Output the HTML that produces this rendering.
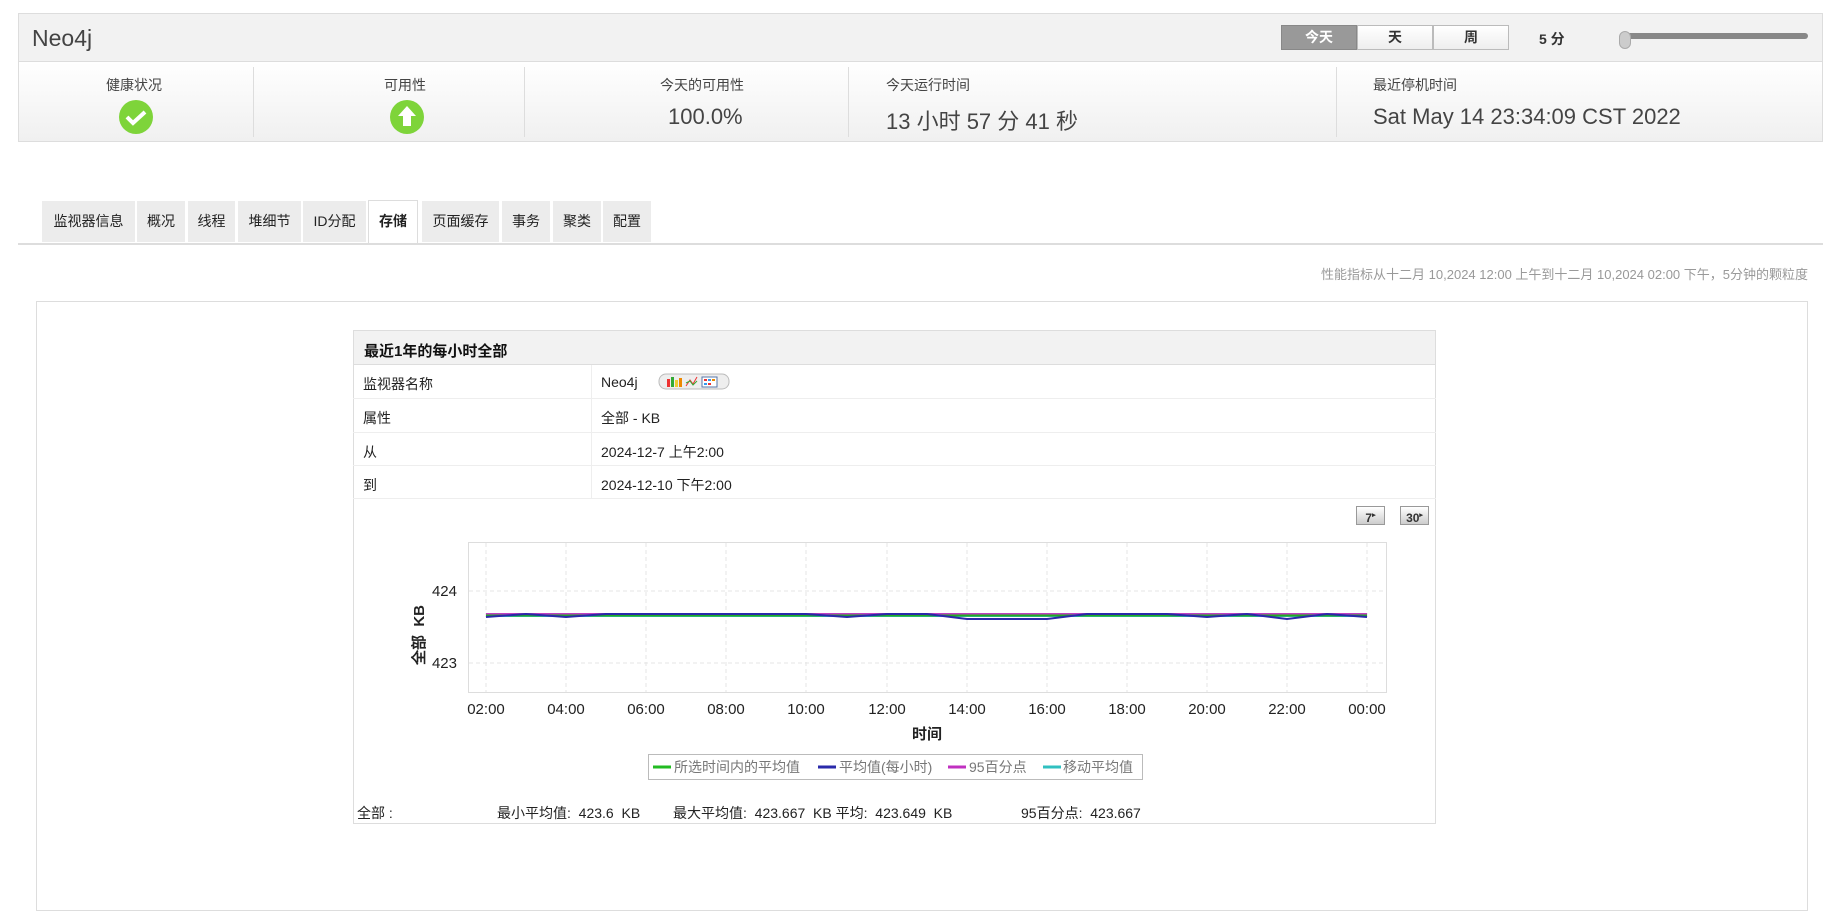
<!DOCTYPE html>
<html><head><meta charset="utf-8">
<style>
*{margin:0;padding:0;box-sizing:border-box}
body{width:1835px;height:899px;overflow:hidden;background:#fff;font-family:"Liberation Sans","Noto Sans CJK SC",sans-serif;color:#333;position:relative}
.a{position:absolute;white-space:nowrap}
.hdr{left:18px;top:13px;width:1805px;height:129px;border:1px solid #ddd;background:#f2f2f2}
.stats{left:18px;top:61px;width:1805px;height:81px;border:1px solid #ddd;border-top:1px solid #ddd;background:linear-gradient(#fff,#f0f0f0)}
.div{width:1px;background:#ddd;top:67px;height:70px}
.lbl{font-size:14px;color:#444}
.val{font-size:22px;color:#444}
.btn{top:25px;height:25px;width:76px;border:1px solid #bbb;background:linear-gradient(#fff,#eee);font-size:14px;font-weight:bold;color:#333;text-align:center;line-height:23px}
.tab{top:201px;height:41px;background:#ececec;font-size:14px;color:#222;text-align:center;line-height:41px}
.row{left:353px;width:1083px;border-bottom:1px solid #eee;font-size:14px;color:#222}
.row span{position:absolute;top:9px}
.tl{font-size:15px;fill:#222;font-family:"Liberation Sans",sans-serif}
</style></head><body>
<div class="a hdr"></div>
<div class="a stats"></div>
<div class="a" style="left:32px;top:25px;font-size:23px;color:#444">Neo4j</div>
<div class="a btn" style="left:1281px;background:#999;color:#fff;border-color:#888">今天</div>
<div class="a btn" style="left:1357px">天</div>
<div class="a btn" style="left:1433px">周</div>
<div class="a" style="left:1539px;top:29px;font-size:14px;font-weight:bold">5 分</div>
<div class="a" style="left:1622px;top:33px;width:186px;height:6px;background:#888;border-radius:3px"></div>
<div class="a" style="left:1619px;top:31px;width:12px;height:18px;background:#ccc;border:1px solid #aaa;border-radius:6px"></div>

<div class="a div" style="left:253px"></div>
<div class="a div" style="left:524px"></div>
<div class="a div" style="left:848px"></div>
<div class="a div" style="left:1336px"></div>
<div class="a lbl" style="left:106px;top:75px">健康状况</div>
<div class="a lbl" style="left:384px;top:75px">可用性</div>
<div class="a lbl" style="left:660px;top:75px">今天的可用性</div>
<div class="a lbl" style="left:886px;top:75px">今天运行时间</div>
<div class="a lbl" style="left:1373px;top:75px">最近停机时间</div>
<svg class="a" style="left:118px;top:99px" width="36" height="36"><circle cx="18" cy="18" r="17" fill="#7ed43a"/><path d="M9 18 l6 6 l12 -11" stroke="#fff" stroke-width="4" fill="none"/></svg>
<svg class="a" style="left:389px;top:99px" width="36" height="36"><circle cx="18" cy="18" r="17" fill="#7ed43a"/><path d="M18 7 l9 10 h-5 v10 h-8 v-10 h-5z" fill="#fff"/></svg>
<div class="a val" style="left:668px;top:104px">100.0%</div>
<div class="a val" style="left:886px;top:104px">13 小时 57 分 41 秒</div>
<div class="a val" style="left:1373px;top:104px">Sat May 14 23:34:09 CST 2022</div>

<div class="a tab" style="left:42px;width:93px">监视器信息</div>
<div class="a tab" style="left:137px;width:48px">概况</div>
<div class="a tab" style="left:188px;width:47px">线程</div>
<div class="a tab" style="left:238px;width:63px">堆细节</div>
<div class="a tab" style="left:303px;width:63px">ID分配</div>
<div class="a tab" style="left:368px;width:50px;background:#fff;border:1px solid #ddd;border-bottom:none;font-weight:bold;top:200px;height:44px">存储</div>
<div class="a tab" style="left:422px;width:77px">页面缓存</div>
<div class="a tab" style="left:502px;width:48px">事务</div>
<div class="a tab" style="left:553px;width:48px">聚类</div>
<div class="a tab" style="left:603px;width:48px">配置</div>
<div class="a" style="left:18px;top:243px;width:1805px;height:2px;background:#ddd"></div>
<div class="a" style="right:27px;top:264px;font-size:13px;color:#999">性能指标从十二月 10,2024 12:00 上午到十二月 10,2024 02:00 下午，5分钟的颗粒度</div>

<div class="a" style="left:36px;top:301px;width:1772px;height:610px;border:1px solid #ddd"></div>
<div class="a" style="left:353px;top:330px;width:1083px;height:494px;border:1px solid #ddd"></div>
<div class="a" style="left:354px;top:331px;width:1081px;height:34px;background:#f2f2f2;border-bottom:1px solid #ddd;font-size:15px;font-weight:bold;color:#111;padding:9px 10px">最近1年的每小时全部</div>
<div class="a row" style="top:365px;height:34px"><span style="left:10px">监视器名称</span><span style="left:248px">Neo4j</span></div>
<div class="a row" style="top:399px;height:34px"><span style="left:10px">属性</span><span style="left:248px">全部 - KB</span></div>
<div class="a row" style="top:433px;height:33px"><span style="left:10px">从</span><span style="left:248px">2024-12-7 上午2:00</span></div>
<div class="a row" style="top:466px;height:33px"><span style="left:10px">到</span><span style="left:248px">2024-12-10 下午2:00</span></div>
<div class="a" style="left:591px;top:365px;width:1px;height:134px;background:#eee"></div>
<svg class="a" style="left:658px;top:373px" width="72" height="17"><rect x="1" y="1" width="70" height="15" rx="7" fill="#eee" stroke="#bbb"/><rect x="9" y="6" width="3" height="8" fill="#e33"/><rect x="13" y="4" width="3" height="10" fill="#3a3"/><rect x="17" y="7" width="3" height="7" fill="#ec3"/><rect x="21" y="5" width="3" height="9" fill="#e80"/><path d="M28 13 l4 -6 l3 4 l4 -7" stroke="#e33" fill="none"/><path d="M28 10 l4 -2 l3 4 l4 -4" stroke="#3a3" fill="none"/><rect x="44" y="4" width="15" height="10" fill="#fff" stroke="#57a"/><rect x="46" y="6" width="3" height="2" fill="#e33"/><rect x="50" y="6" width="3" height="2" fill="#39e"/><rect x="54" y="6" width="3" height="2" fill="#e80"/><rect x="46" y="10" width="3" height="2" fill="#39e"/><rect x="50" y="10" width="3" height="2" fill="#e33"/></svg>

<div class="a" style="left:1356px;top:506px;width:29px;height:19px;border:1px solid #999;background:linear-gradient(#fff,#ccc);font-size:12px;font-weight:bold;text-align:center;line-height:17px">7<sup style="font-size:7px">▸</sup></div>
<div class="a" style="left:1400px;top:506px;width:29px;height:19px;border:1px solid #999;background:linear-gradient(#fff,#ccc);font-size:12px;font-weight:bold;text-align:center;line-height:17px">30<sup style="font-size:7px">▸</sup></div>

<svg class="a" style="left:0;top:0" width="1835" height="899">
<rect x="468.5" y="542.5" width="918" height="150" fill="#fff" stroke="#ddd"/>
<g stroke="#e4e4e4" stroke-dasharray="4,3">
<line x1="486" y1="543" x2="486" y2="692"/><line x1="566" y1="543" x2="566" y2="692"/><line x1="646" y1="543" x2="646" y2="692"/><line x1="726" y1="543" x2="726" y2="692"/><line x1="806" y1="543" x2="806" y2="692"/><line x1="887" y1="543" x2="887" y2="692"/><line x1="967" y1="543" x2="967" y2="692"/><line x1="1047" y1="543" x2="1047" y2="692"/><line x1="1127" y1="543" x2="1127" y2="692"/><line x1="1207" y1="543" x2="1207" y2="692"/><line x1="1287" y1="543" x2="1287" y2="692"/><line x1="1367" y1="543" x2="1367" y2="692"/>
<line x1="469" y1="591" x2="1386" y2="591"/><line x1="469" y1="663" x2="1386" y2="663"/>
</g>
<line x1="486" y1="614" x2="1367" y2="614" stroke="#c040c0" stroke-width="2"/>
<line x1="486" y1="616" x2="1367" y2="616" stroke="#30c0c0" stroke-width="2"/>
<line x1="486" y1="615.5" x2="1367" y2="615.5" stroke="#22aa22" stroke-width="2"/>
<polyline fill="none" stroke="#2a2aaa" stroke-width="2" points="486,617 526,614 566,617 606,614 646,614 686,614 726,614 766,614 806,614 847,617 887,614 927,614 967,619 1007,619 1047,619 1087,614 1127,614 1167,614 1207,617 1247,614 1287,619 1327,614 1367,617"/>
<text class="tl" x="457" y="596" text-anchor="end">424</text>
<text class="tl" x="457" y="668" text-anchor="end">423</text>
<text class="tl" transform="translate(424,665) rotate(-90)" font-weight="bold" font-family="Liberation Sans,Noto Sans CJK SC,sans-serif">全部 &#160;KB</text>
<g class="tl" text-anchor="middle">
<text class="tl" x="486" y="714" text-anchor="middle">02:00</text><text class="tl" x="566" y="714" text-anchor="middle">04:00</text><text class="tl" x="646" y="714" text-anchor="middle">06:00</text><text class="tl" x="726" y="714" text-anchor="middle">08:00</text><text class="tl" x="806" y="714" text-anchor="middle">10:00</text><text class="tl" x="887" y="714" text-anchor="middle">12:00</text><text class="tl" x="967" y="714" text-anchor="middle">14:00</text><text class="tl" x="1047" y="714" text-anchor="middle">16:00</text><text class="tl" x="1127" y="714" text-anchor="middle">18:00</text><text class="tl" x="1207" y="714" text-anchor="middle">20:00</text><text class="tl" x="1287" y="714" text-anchor="middle">22:00</text><text class="tl" x="1367" y="714" text-anchor="middle">00:00</text>
</g>
<text x="927" y="739" text-anchor="middle" font-size="15" font-weight="bold" fill="#222" font-family="Liberation Sans,Noto Sans CJK SC,sans-serif">时间</text>
<rect x="648.5" y="754.5" width="494" height="25" fill="#fff" stroke="#bbb"/>
<g font-size="14" fill="#777" font-family="Liberation Sans,Noto Sans CJK SC,sans-serif">
<line x1="653" y1="767" x2="671" y2="767" stroke="#22bb22" stroke-width="3"/><text x="674" y="772">所选时间内的平均值</text>
<line x1="818" y1="767" x2="836" y2="767" stroke="#2a2aaa" stroke-width="3"/><text x="839" y="772">平均值(每小时)</text>
<line x1="948" y1="767" x2="966" y2="767" stroke="#c030c0" stroke-width="3"/><text x="969" y="772">95百分点</text>
<line x1="1043" y1="767" x2="1061" y2="767" stroke="#30c0c0" stroke-width="3"/><text x="1063" y="772">移动平均值</text>
</g>
</svg>
<div class="a" style="left:357px;top:803px;font-size:14px;color:#222">全部 :</div>
<div class="a" style="left:497px;top:803px;font-size:14px;color:#222">最小平均值:&nbsp; 423.6&nbsp; KB</div>
<div class="a" style="left:673px;top:803px;font-size:14px;color:#222">最大平均值:&nbsp; 423.667&nbsp; KB 平均:&nbsp; 423.649&nbsp; KB</div>
<div class="a" style="left:1021px;top:803px;font-size:14px;color:#222">95百分点:&nbsp; 423.667</div>
</body></html>
